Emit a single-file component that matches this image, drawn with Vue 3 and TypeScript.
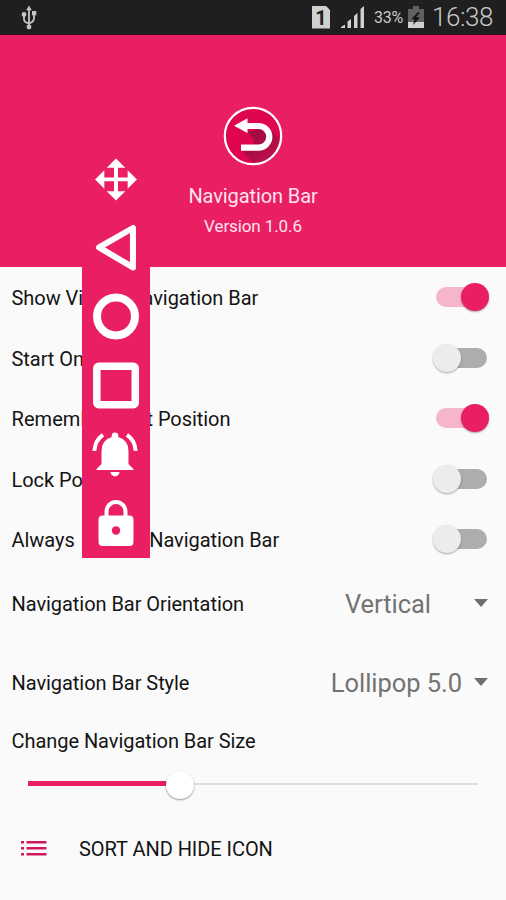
<script setup lang="ts">
import { ref } from 'vue'

interface Toggle { lead: string; tail: string; on: boolean; fit?: string }
interface Choice { label: string; value: string }

const toggles = ref<Toggle[]>([
  { lead: 'Show Virtual', tail: ' Navigation Bar', on: true },
  { lead: 'Start On', tail: ' Boot', on: false },
  { lead: 'Remember Last', tail: ' Position', on: true, fit: 'loose' },
  { lead: 'Lock', tail: ' Position', on: false },
  { lead: 'Always on Top', tail: ' Navigation Bar', on: false, fit: 'wide' },
])
const choices: Choice[] = [
  { label: 'Navigation Bar Orientation', value: 'Vertical' },
  { label: 'Navigation Bar Style', value: 'Lollipop 5.0' },
]
const size = ref(33.7)
</script>

<template>
  <div class="screen">
    <div class="status">
      <svg class="usb" width="16" height="26" viewBox="0 0 16 26">
        <path d="M8 4v18M8 18.500Q3 17.500 3 14V9.500M8 18.500Q13 17 13 13V8" fill="none" stroke="#c4c4c4" stroke-width="1.800" />
        <path d="M8 .5l2.800 4.800H5.200z" fill="#c4c4c4" />
        <circle cx="8" cy="22" r="2.400" fill="#c4c4c4" />
        <circle cx="3" cy="9.500" r="2.400" fill="#c4c4c4" />
        <rect x="11" y="6" width="4.300" height="4.300" fill="#c4c4c4" />
      </svg>
      <div class="tray">
        <span class="sim">1</span>
        <svg class="signal" width="24" height="24" viewBox="0 0 24 24" fill="#d0d0d0">
          <path d="M0 23v-1l4-2.500V23zM6.500 23v-6.500l3.500-2.500v9zM13 23V11l3.500-3v15zM19.500 23V4L23 1v22z" />
        </svg>
        <span class="percent">33%</span>
        <svg class="battery" width="16" height="24" viewBox="0 0 16 24">
          <path d="M5 1h6v3h5v13H0V4h5z" fill="#606060" />
          <path d="M0 17h16v6H0z" fill="#d0d0d0" />
          <path d="M10 7L3.500 14l3 .5L5 20l7-7.500-4-.5L12 8z" fill="#151515" />
        </svg>
        <span class="clock">16:38</span>
      </div>
    </div>

    <header class="hero">
      <svg class="logo" width="60" height="60" viewBox="0 0 60 60">
        <defs>
          <clipPath id="disc"><circle cx="30" cy="30" r="28" /></clipPath>
          <linearGradient id="shade" x1="0" y1="0" x2="1" y2="1">
            <stop offset=".3" stop-color="#a50b44" /><stop offset="1" stop-color="#cf1455" />
          </linearGradient>
        </defs>
        <circle cx="30" cy="30" r="28" fill="#e0054f" />
        <path clip-path="url(#disc)" d="M24 26L31 33V39L18 44L36 62L64 40L45 21Z" fill="url(#shade)" />
        <circle cx="30" cy="30" r="28.200" fill="none" stroke="#fff" stroke-width="2.200" />
        <path d="M22 20H35.500a10.800 10.800 0 0 1 0 21.600H18" fill="none" stroke="#fff" stroke-width="6.200" />
        <path d="M11 19.700L24.500 12.300v14.800z" fill="#fff" />
      </svg>
      <h1>Navigation Bar</h1>
      <p>Version 1.0.6</p>
    </header>

    <main>
      <label v-for="t in toggles" :key="t.lead" class="row">
        <span class="name" :class="t.fit"><span class="lead">{{ t.lead }}</span>{{ t.tail }}</span>
        <span class="switch" :class="{ on: t.on }" @click="t.on = !t.on"><i /></span>
      </label>
      <div v-for="c in choices" :key="c.label" class="choice">
        <span>{{ c.label }}</span>
        <span class="value">{{ c.value }}</span>
        <i class="caret" />
      </div>
      <div class="size">Change Navigation Bar Size</div>
      <div class="slider">
        <div class="fill" :style="{ width: size + '%' }" />
        <div class="knob" />
        <div class="rest" />
      </div>
      <div class="sort">
        <svg width="26" height="16" viewBox="0 0 26 16" fill="#d2185c">
          <path d="M0 1h3v2.500H0zM5.500 1H25.500v2.500H5.500zM0 7h3v2.500H0zM5.500 7H25.500v2.500H5.500zM0 13h3v2.500H0zM5.500 13H25.500v2.500H5.500z" />
        </svg>
        <span>SORT AND HIDE ICON</span>
      </div>
    </main>

    <nav class="floating">
      <svg viewBox="0 0 68 69" fill="#fff">
        <path d="M34 13.500l9.300 9.300H36v9.800h9.700v-7.300L55 34.500l-9.300 9.300v-7.400H36v9.800h7.300L34 55.500l-9.300-9.300H32v-9.800h-9.700v7.400L13 34.500l9.300-9.200v7.300H32v-9.800h-7.300z" />
      </svg>
      <svg viewBox="0 0 68 69"><path d="M17 34.500L51 15v39.500z" fill="none" stroke="#fff" stroke-width="6" stroke-linejoin="round" /></svg>
      <svg viewBox="0 0 68 69"><circle cx="34" cy="34.500" r="19" fill="none" stroke="#fff" stroke-width="8" /></svg>
      <svg viewBox="0 0 68 69"><rect x="14.800" y="15.300" width="38.500" height="38.500" rx="2" fill="none" stroke="#fff" stroke-width="7.500" /></svg>
      <svg viewBox="0 0 68 69">
        <path d="M33 12.500a3.300 3.300 0 0 1 3.300 3.300v1.200Q46.500 20 46.500 31v13l5 5v1h-37v-1l5-5V31Q19.500 20 29.700 17v-1.200A3.300 3.300 0 0 1 33 12.500zM28.500 52h9a4.500 4.500 0 0 1-9 0z" fill="#fff" />
        <path d="M21 15Q13 20.500 12.300 31M45 15Q53 20.500 53.700 31" fill="none" stroke="#fff" stroke-width="4" />
      </svg>
      <svg viewBox="0 0 68 69">
        <path d="M24.500 28.500v-6a9.500 9.500 0 0 1 19 0v6" fill="none" stroke="#fff" stroke-width="4" />
        <rect x="16.500" y="26.500" width="35" height="30.500" rx="4" fill="#fff" />
        <circle cx="34" cy="41.500" r="4.200" fill="#e91e63" />
      </svg>
    </nav>
  </div>
</template>

<style>
body { margin: 0; background: #fafafa; }
</style>

<style scoped>
.screen { position: relative; box-sizing: border-box; width: 506px; height: 900px; overflow: hidden; background: #fafafa; color: #141414; font: 20px/24px Roboto, sans-serif; letter-spacing: -.05px; }
.status { display: flex; justify-content: space-between; height: 35px; box-sizing: border-box; padding: 0 11px 0 21px; background: #1f1f1f; border-bottom: 1px solid #35101c; color: #c8c8c8; }
.usb { margin-top: 5px; }
.tray { display: flex; align-items: center; }
.sim { width: 18px; height: 23px; margin-right: 11px; background: #d0d0d0; color: #1f1f1f; text-align: center; font: bold 20px/24px Roboto, sans-serif; clip-path: polygon(0 0, 75% 0, 100% 20%, 100% 100%, 0 100%); }
.signal { margin-right: 9px; }
.percent { width: 34px; padding-top: 2px; font-size: 16px; letter-spacing: -.2px; }
.battery { margin-top: -1px; }
.clock { width: 63px; margin-left: 8px; padding-top: 1px; font-size: 26px; font-weight: 300; line-height: 35px; letter-spacing: -.4px; }
.hero { display: flex; flex-direction: column; align-items: center; height: 232px; box-sizing: border-box; padding-top: 71px; background: #e91e63; color: #ffe3ee; }
.logo { display: block; }
h1 { margin: 17px 0 0; font-size: 20px; font-weight: 400; line-height: 26px; letter-spacing: -.1px; }
p { margin: 6px 0 0; font-size: 17px; line-height: 22px; letter-spacing: -.1px; }
main { padding: 0 12px 0 11.5px; }
.row { display: flex; align-items: center; justify-content: space-between; height: 60.5px; }
.name { padding-top: 2px; white-space: pre; }
.loose .lead { letter-spacing: .06px; }
.wide .lead { word-spacing: 2.2px; }
.switch { position: relative; display: block; width: 51px; margin-right: 7.5px; }
.switch::before { content: ''; display: block; width: 51px; height: 20px; border-radius: 10px; background: #adadad; }
.switch i { position: absolute; top: -4px; left: -3px; width: 28px; height: 28px; border-radius: 50%; background: #ececec; box-shadow: 0 1px 2px #0005; }
.switch.on::before { background: #f6b4cd; }
.switch.on i { left: 25.5px; background: #e91e63; }
.choice { display: flex; align-items: center; height: 89px; }
.choice:nth-of-type(1) { height: 69px; }
.value { margin-left: auto; margin-right: 12px; color: #737373; font-size: 25.5px; }
.choice:nth-of-type(1) .value { margin-right: 43px; }
.caret { margin: -3px 6px 0 0; border: 7px solid transparent; border-top: 8px solid #6e6e6e; border-bottom: 0; }
.size { height: 24px; margin-top: 1px; }
.slider { display: flex; align-items: center; height: 28px; margin: 17px 16px 0; }
.fill { flex: none; height: 5px; margin-right: -13px; background: #e91e63; }
.knob { position: relative; top: 1px; flex: none; width: 28px; height: 28px; border-radius: 50%; background: #fff; box-shadow: 0 1px 2px #0006; }
.rest { flex: 1; height: 2px; background: #dedede; }
.sort { display: flex; align-items: center; gap: 32px; height: 24px; margin: 39px 0 0 9.5px; }
.sort svg { margin-top: -2px; }
.floating { position: absolute; top: 144.5px; left: 82px; width: 68px; height: 413.5px; background: #e91e63; }
.floating svg { display: block; width: 68px; height: 68.9px; }
</style>
